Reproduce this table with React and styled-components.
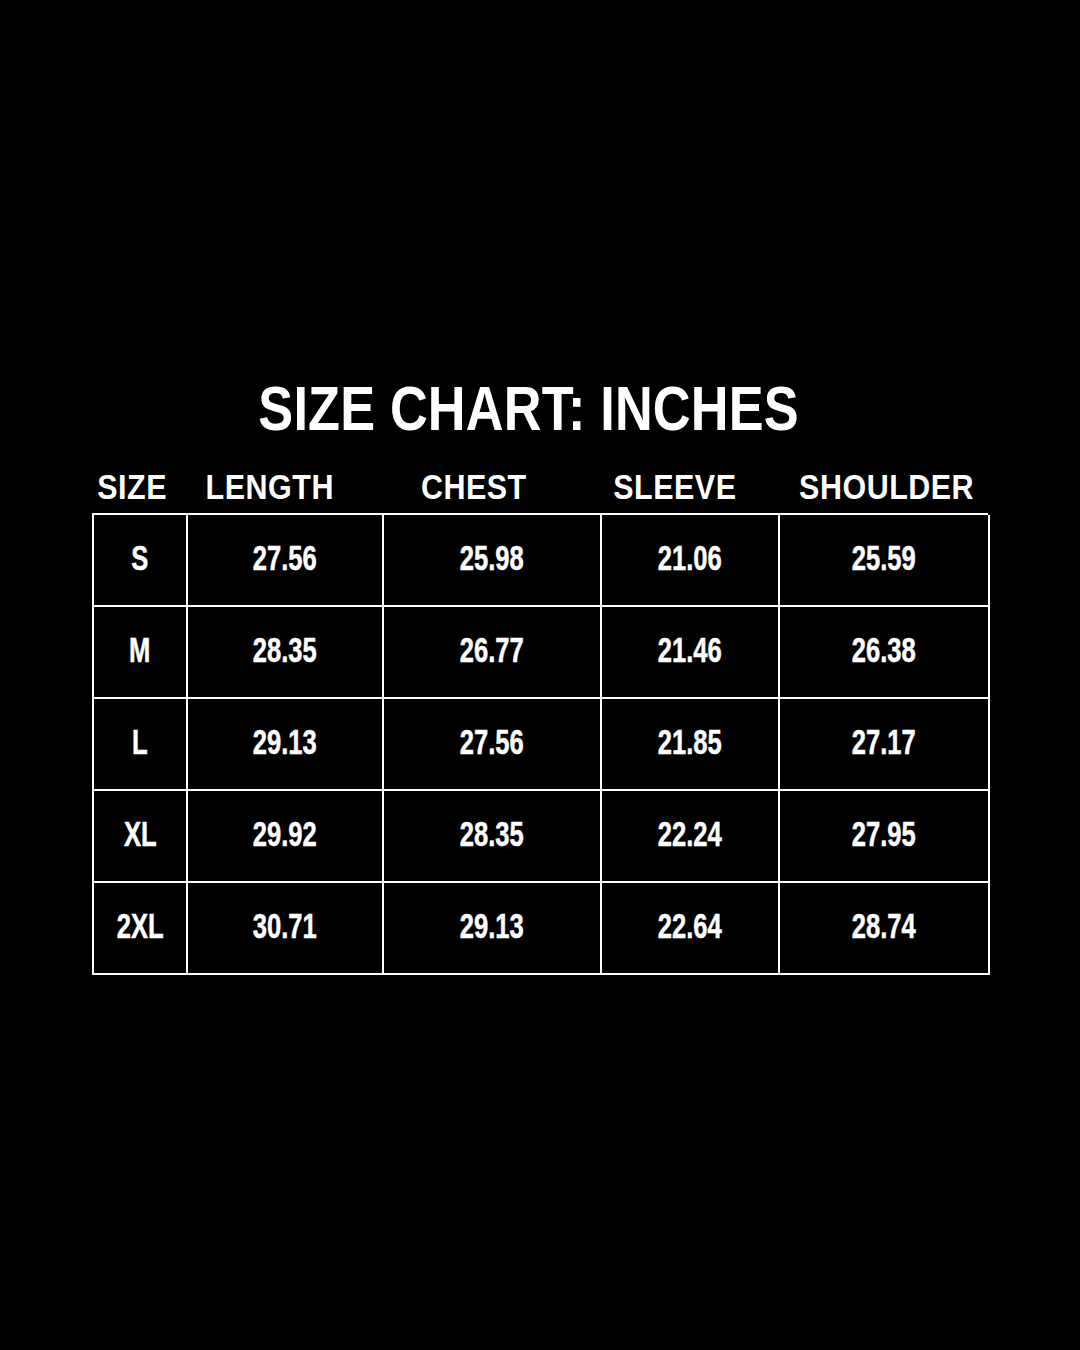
import React from "react";
import styled, { createGlobalStyle } from "styled-components";

const Global = createGlobalStyle`
  html, body { margin: 0; padding: 0; background: #000; }
  body { width: 1080px; height: 1350px; overflow: hidden; }
`;

const FONT = `"Liberation Sans", Arial, sans-serif`;

const Page = styled.div`
  width: 1080px;
  height: 1350px;
  background: #000;
  color: #fff;
  font-family: ${FONT};
  font-weight: 700;
  display: flex;
  flex-direction: column;
  align-items: flex-start;
  padding-top: 373px;
  box-sizing: border-box;
`;

const Title = styled.h1`
  margin: 0;
  width: 1058px;
  text-align: center;
  font-size: 63px;
  line-height: 70px;
  font-weight: 700;
  letter-spacing: 0.2px;
`;

const Squeeze = styled.span`
  display: inline-block;
  white-space: nowrap;
  transform: scaleX(${(p) => p.$x});
  transform-origin: center;
`;

const HeaderRow = styled.div`
  display: grid;
  grid-template-columns: 78px 200px 208px 194px 230px;
  margin-left: 92px;
  margin-top: 24px;
  height: 40px;
  align-items: center;
`;

const HeaderCell = styled.div`
  text-align: center;
  font-size: 35px;
  line-height: 40px;
  letter-spacing: 0.6px;
`;

const Table = styled.div`
  display: grid;
  grid-template-columns: 94px 196px 218px 178px 210px;
  grid-auto-rows: 92px;
  margin-left: 92px;
  margin-top: 6px;
  border-top: 2px solid #fff;
  border-left: 2px solid #fff;
  width: 896px;
  box-sizing: border-box;
`;

const Cell = styled.div`
  border-right: 2px solid #fff;
  border-bottom: 2px solid #fff;
  display: flex;
  align-items: center;
  justify-content: center;
  padding-bottom: 5px;
  box-sizing: border-box;
  font-size: 35px;
  line-height: 40px;
  -webkit-text-stroke: 0.5px #fff;
`;

const headers = ["SIZE", "LENGTH", "CHEST", "SLEEVE", "SHOULDER"];
const rows = [
  ["S", "27.56", "25.98", "21.06", "25.59"],
  ["M", "28.35", "26.77", "21.46", "26.38"],
  ["L", "29.13", "27.56", "21.85", "27.17"],
  ["XL", "29.92", "28.35", "22.24", "27.95"],
  ["2XL", "30.71", "29.13", "22.64", "28.74"],
];

export default function App() {
  return (
    <>
      <Global />
      <Page>
        <Title>
          <Squeeze $x={0.83}>SIZE CHART: INCHES</Squeeze>
        </Title>
        <HeaderRow>
          {headers.map((h) => (
            <HeaderCell key={h}>
              <Squeeze $x={0.87}>{h}</Squeeze>
            </HeaderCell>
          ))}
        </HeaderRow>
        <Table>
          {rows.map((r) =>
            r.map((v, i) => (
              <Cell key={r[0] + i}>
                <Squeeze $x={0.73}>{v}</Squeeze>
              </Cell>
            ))
          )}
        </Table>
      </Page>
    </>
  );
}
